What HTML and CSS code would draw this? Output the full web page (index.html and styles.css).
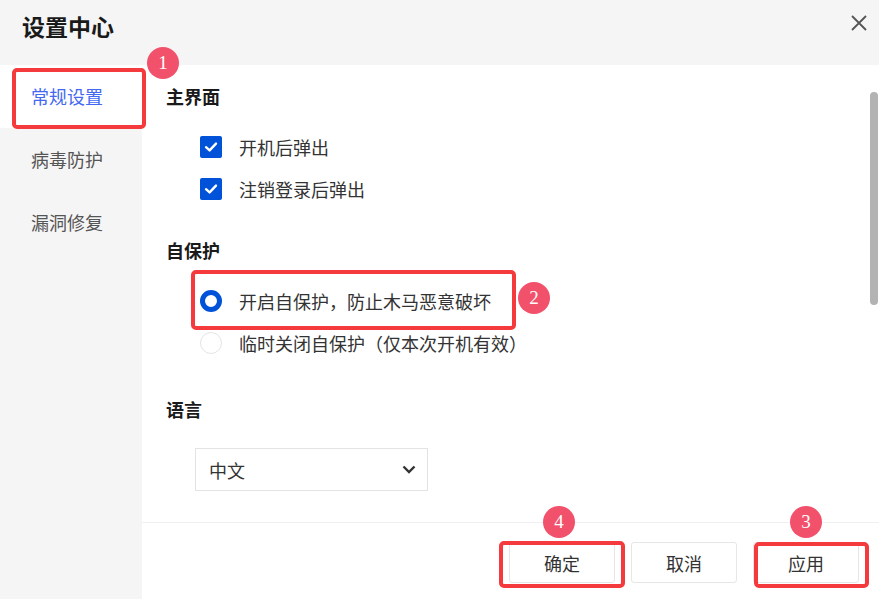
FILE: index.html
```html
<!DOCTYPE html>
<html lang="zh-CN">
<head>
    <meta charset="UTF-8">
    <meta name="viewport" content="width=device-width, initial-scale=1.0">
    <title>设置中心</title>
    <link rel="stylesheet" href="styles.css">
</head>
<body>

    <div class="dialog">
        <!-- Title bar -->
        <div class="header">
            <h1 class="title">设置中心</h1>
            <span class="close">
                <svg width="16" height="16" viewBox="0 0 16 16">
                    <path d="M1 1 L15 15 M15 1 L1 15" stroke="#555" stroke-width="1.8" fill="none"/>
                </svg>
            </span>
        </div>

        <div class="body">
            <!-- Sidebar -->
            <ul class="sidebar">
                <li class="nav-item active">
                    常规设置
                    <span class="mark mark-nav"></span>
                    <span class="badge badge-1">1</span>
                </li>
                <li class="nav-item">病毒防护</li>
                <li class="nav-item">漏洞修复</li>
            </ul>

            <div class="main">
                <div class="content">
                    <div class="section">
                        <div class="section-title">主界面</div>
                        <label class="row">
                            <span class="checkbox">
                                <svg width="14" height="12" viewBox="0 0 14 12">
                                    <path d="M2 6.2 L5.6 9.4 L12 2.6" stroke="#fff" stroke-width="2.4" fill="none" stroke-linecap="round" stroke-linejoin="round"/>
                                </svg>
                            </span>
                            开机后弹出
                        </label>
                        <label class="row">
                            <span class="checkbox">
                                <svg width="14" height="12" viewBox="0 0 14 12">
                                    <path d="M2 6.2 L5.6 9.4 L12 2.6" stroke="#fff" stroke-width="2.4" fill="none" stroke-linecap="round" stroke-linejoin="round"/>
                                </svg>
                            </span>
                            注销登录后弹出
                        </label>
                    </div>

                    <div class="section section-protect">
                        <div class="section-title">自保护</div>
                        <label class="row">
                            <span class="radio checked"></span>
                            开启自保护，防止木马恶意破坏
                            <span class="mark mark-radio"></span>
                            <span class="badge badge-2">2</span>
                        </label>
                        <label class="row">
                            <span class="radio"></span>
                            临时关闭自保护（仅本次开机有效）
                        </label>
                    </div>

                    <div class="section section-lang">
                        <div class="section-title">语言</div>
                        <div class="select">
                            <span>中文</span>
                            <svg width="14" height="9" viewBox="0 0 14 9">
                                <path d="M1.5 1.5 L7 7 L12.5 1.5" stroke="#333" stroke-width="2.4" fill="none"/>
                            </svg>
                        </div>
                    </div>

                    <div class="scroll-thumb"></div>
                </div>

                <!-- Buttons -->
                <div class="footer">
                    <button class="btn">
                        确定
                        <span class="mark mark-ok"></span>
                        <span class="badge badge-4">4</span>
                    </button>
                    <button class="btn">取消</button>
                    <button class="btn">
                        应用
                        <span class="mark mark-apply"></span>
                        <span class="badge badge-3">3</span>
                    </button>
                </div>
            </div>
        </div>
    </div>

</body>
</html>
```

FILE: styles.css
```css
* {
    box-sizing: border-box;
}
body {
    margin: 0;
    font-family: "Noto Sans CJK SC", "Noto Sans", sans-serif;
    color: #333;
    background-color: #fff;
}
.dialog {
    width: 879px;
    height: 599px;
    display: flex;
    flex-direction: column;
    overflow: hidden;
}
.header {
    height: 65px;
    background-color: #f5f5f5;
    display: flex;
    justify-content: space-between;
    align-items: flex-start;
    padding: 11px 12px 0 22px;
}
.title {
    margin: 0;
    font-size: 23px;
    line-height: 30px;
    font-weight: bold;
    color: #1a1a1a;
}
.close {
    display: flex;
    margin-top: 4px;
}
.body {
    flex: 1;
    display: flex;
}
.sidebar {
    width: 142px;
    margin: 0;
    padding: 0;
    list-style: none;
    background-color: #f5f5f5;
}
.nav-item {
    position: relative;
    height: 63px;
    line-height: 63px;
    padding-left: 31px;
    font-size: 18px;
    color: #555;
}
.nav-item.active {
    background-color: #fff;
    color: #4468f2;
    z-index: 2;
}
.main {
    flex: 1;
    display: flex;
    flex-direction: column;
}
.content {
    position: relative;
    flex: 1;
    padding: 19px 0 0 24px;
}
.section {
    margin-bottom: 28px;
}
.section-lang {
    margin-top: 33px;
}
.section-title {
    font-size: 18px;
    line-height: 24px;
    font-weight: bold;
    color: #1a1a1a;
    margin-bottom: 18px;
}
.row {
    position: relative;
    display: flex;
    align-items: center;
    height: 42px;
    padding-left: 34px;
    font-size: 18px;
    color: #333;
}
.checkbox {
    width: 22px;
    height: 22px;
    border-radius: 2px;
    background-color: #0052d9;
    display: flex;
    justify-content: center;
    align-items: center;
    margin-right: 17px;
}
.radio {
    width: 22px;
    height: 22px;
    border-radius: 50%;
    border: 1px solid #e4e4ea;
    background-color: #fff;
    margin-right: 17px;
}
.radio.checked {
    border: 5px solid #0052d9;
}
.select {
    margin: 27px 0 0 29px;
    width: 233px;
    height: 43px;
    border: 1px solid #e3e3e3;
    display: flex;
    justify-content: space-between;
    align-items: center;
    padding: 0 11px 0 13px;
    font-size: 18px;
    color: #333;
}
.scroll-thumb {
    position: absolute;
    right: 1px;
    top: 27px;
    width: 8px;
    height: 213px;
    border-radius: 4px;
    background-color: #b3b3b3;
}
.footer {
    height: 77px;
    border-top: 1px solid #f0f0f0;
    display: flex;
    justify-content: flex-end;
    gap: 16px;
    padding: 19px 20px 0 0;
}
.btn {
    position: relative;
    width: 106px;
    height: 41px;
    border: 1px solid #e6e6e6;
    border-radius: 3px;
    background-color: #fff;
    font-family: "Noto Sans CJK SC", sans-serif;
    font-size: 18px;
    color: #333;
}

/* annotation marks */
.mark {
    position: absolute;
    border: 4px solid #f53a3d;
    border-radius: 5px;
    pointer-events: none;
}
.mark-nav {
    left: 12px;
    top: 3px;
    width: 134px;
    height: 61px;
}
.mark-radio {
    left: 25px;
    top: -10px;
    width: 325px;
    height: 60px;
}
.mark-ok {
    left: -11px;
    top: -2px;
    width: 126px;
    height: 47px;
}
.mark-apply {
    left: 0;
    top: -1px;
    width: 115px;
    height: 46px;
}
.badge {
    position: absolute;
    width: 32px;
    height: 32px;
    border-radius: 50%;
    background-color: #f2516b;
    color: #fff;
    font-family: "Liberation Serif", serif;
    font-size: 19px;
    line-height: 32px;
    text-align: center;
}
.badge-1 {
    left: 147px;
    top: -18px;
}
.badge-2 {
    left: 352px;
    top: 2px;
}
.badge-4 {
    left: 33px;
    top: -37px;
}
.badge-3 {
    left: 36px;
    top: -37px;
}
```
